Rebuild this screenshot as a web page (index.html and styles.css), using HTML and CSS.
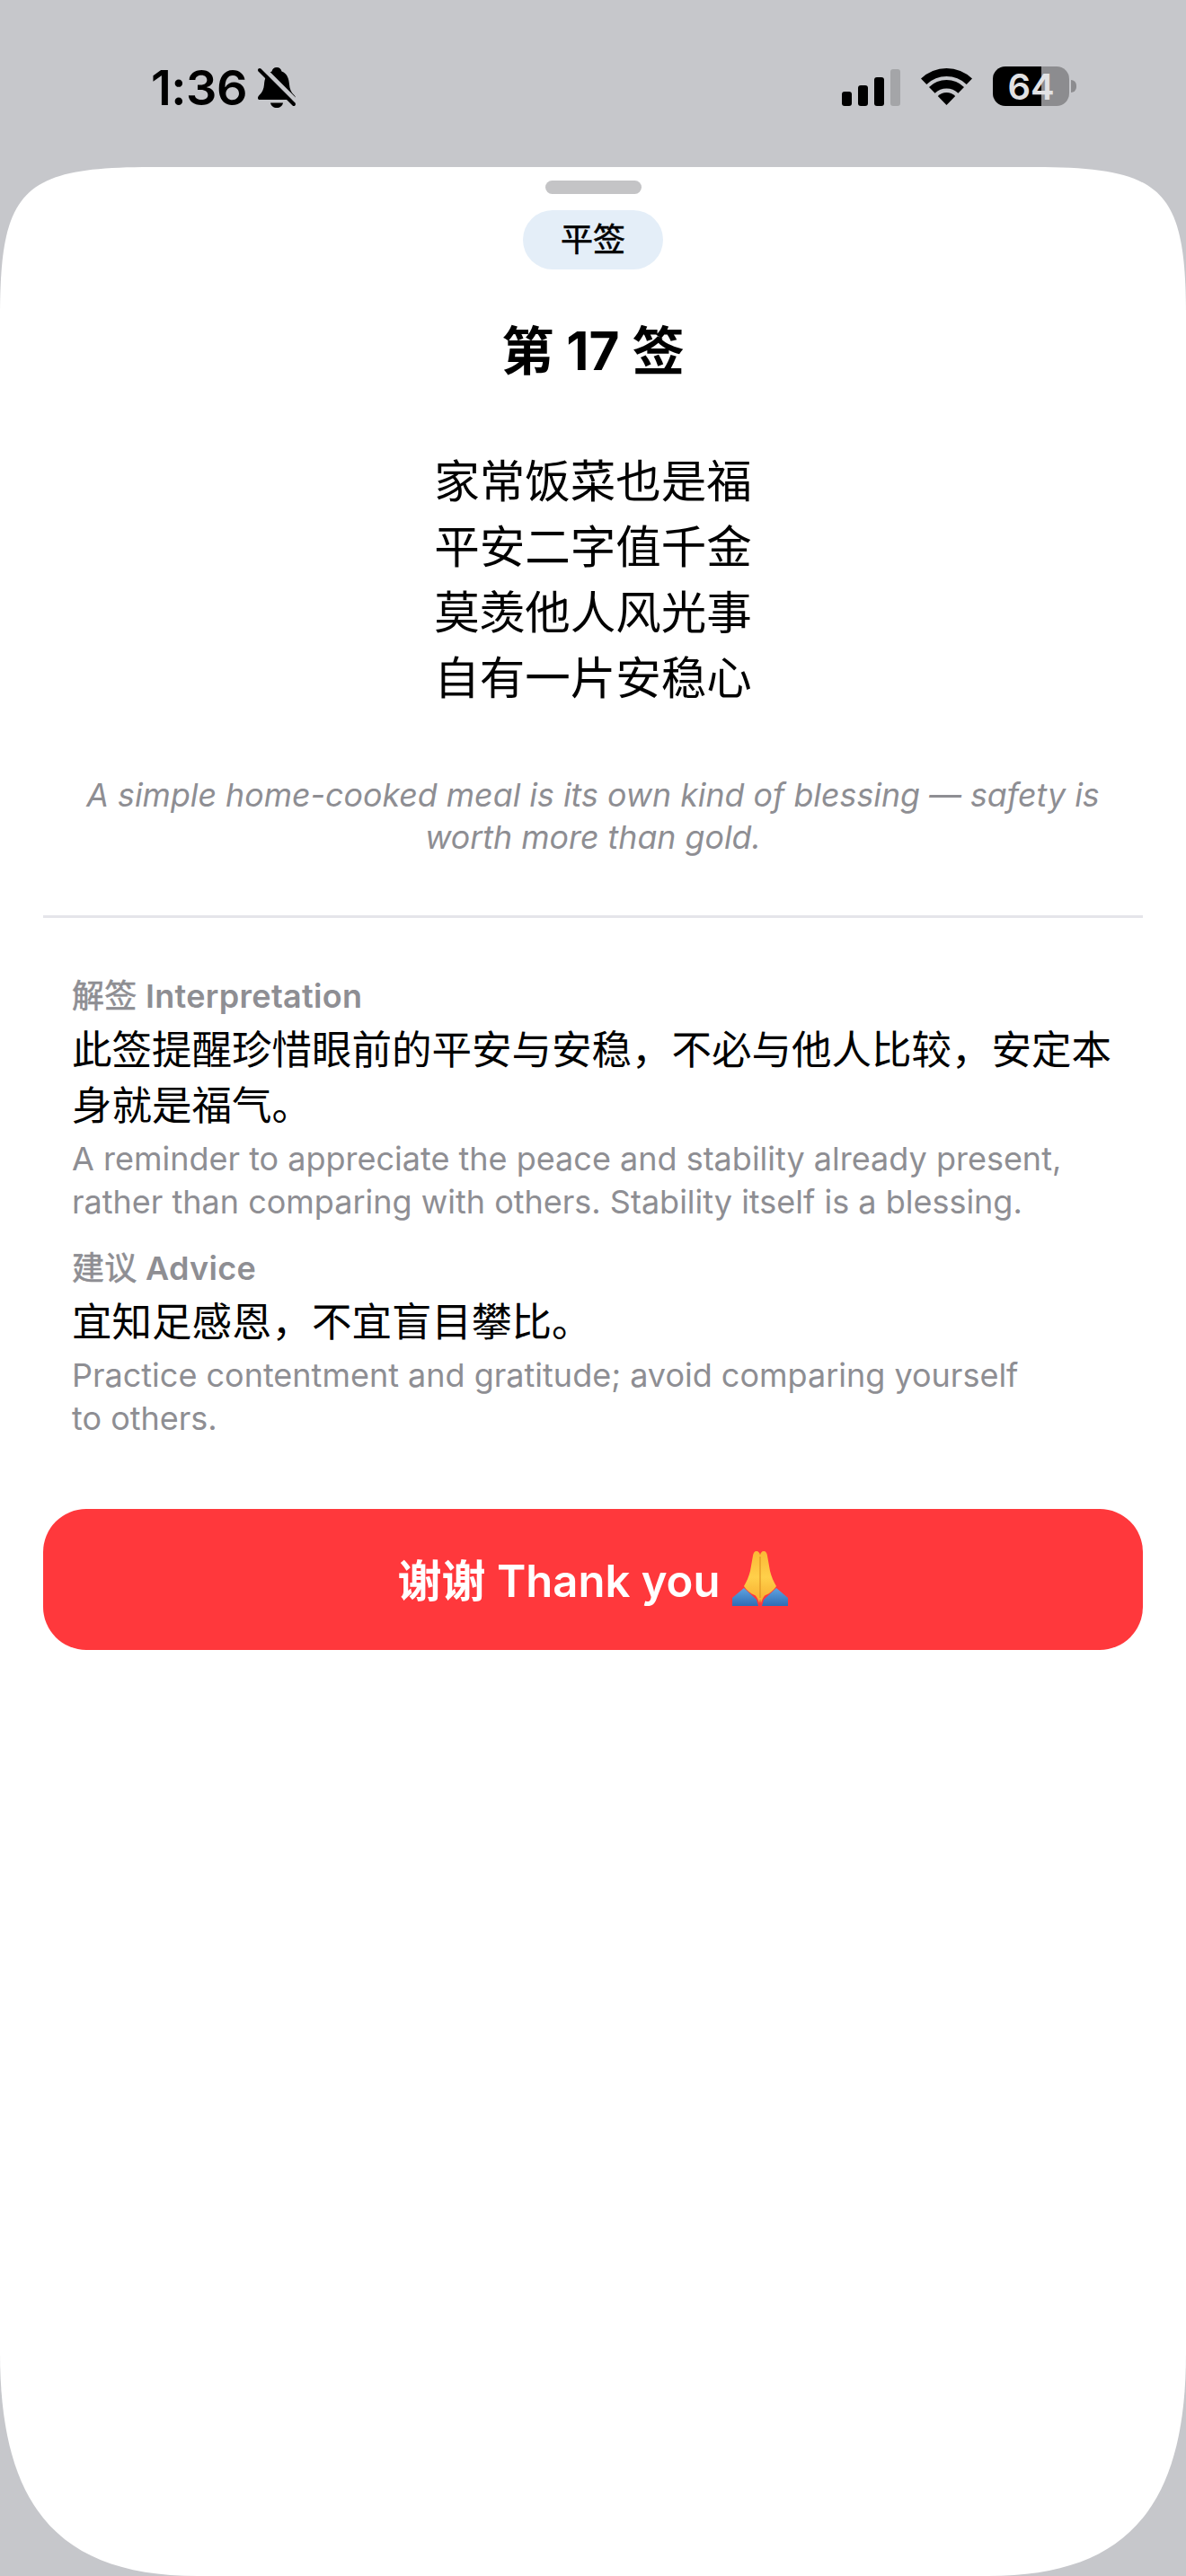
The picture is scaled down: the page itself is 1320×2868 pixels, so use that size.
FILE: index.html
```html
<!DOCTYPE html>
<html lang="zh">
<head>
    <meta charset="UTF-8">
    <meta name="viewport" content="width=device-width, initial-scale=1.0">
    <title>第 17 签</title>
    <link rel="stylesheet" href="styles.css">
</head>
<body>
    <!-- Status bar -->
    <div class="status-bar">
        <div class="status-left">
            <span class="clock">1:36</span>
            <svg class="bell" viewBox="0 0 42 45">
                <path d="M21 0c-3 0-5 2-5.500 4.500C9 7 7.500 13 7 19c-.4 5-2 8.500-5 11.500C.5 32 0 33 0 34.200 0 35.500 1 36 2.500 36h37c1.500 0 2.500-.5 2.500-1.800 0-1.200-.5-2.200-2-3.700-3-3-4.600-6.500-5-11.500-.5-6-2-12-8.500-14.500C26 2 24 0 21 0z"/>
                <path d="M14 39.500h14C27.500 43 24.500 45 21 45s-6.500-2-7-5.500z"/>
                <path class="bell-gap" d="M6 1l38 38"/>
                <path class="bell-slash" d="M2 3l38 38"/>
            </svg>
        </div>
        <div class="status-right">
            <div class="signal">
                <span class="bar bar-1"></span>
                <span class="bar bar-2"></span>
                <span class="bar bar-3"></span>
                <span class="bar bar-4"></span>
            </div>
            <svg class="wifi" viewBox="0 0 57 42">
                <path d="M0 12.500A41 41 0 0 1 57 12.500L50.700 19A32 32 0 0 0 6.300 19z"/>
                <path d="M9 21.900A28 28 0 0 1 48 21.900L41.400 28.700A18.500 18.500 0 0 0 15.600 28.700z"/>
                <path d="M18.800 31.900A14 14 0 0 1 38.200 31.900L28.500 42z"/>
            </svg>
            <div class="battery">
                <div class="battery-body">64</div>
                <span class="battery-nub"></span>
            </div>
        </div>
    </div>

    <!-- Result sheet -->
    <div class="sheet">
        <div class="handle"></div>
        <div class="tag">平签</div>
        <h1 class="title">第 17 签</h1>

        <div class="poem">
            <p>家常饭菜也是福</p>
            <p>平安二字值千金</p>
            <p>莫羡他人风光事</p>
            <p>自有一片安稳心</p>
        </div>

        <p class="translation">A simple home-cooked meal is its own kind of blessing — safety is worth more than gold.</p>

        <div class="divider"></div>

        <div class="section">
            <div class="label"><span class="label-zh">解签</span> Interpretation</div>
            <p class="body-zh">此签提醒珍惜眼前的平安与安稳，不必与他人比较，安定本身就是福气。</p>
            <p class="body-en">A reminder to appreciate the peace and stability already present, rather than comparing with others. Stability itself is a blessing.</p>
        </div>

        <div class="section">
            <div class="label"><span class="label-zh">建议</span> Advice</div>
            <p class="body-zh">宜知足感恩，不宜盲目攀比。</p>
            <p class="body-en">Practice contentment and gratitude; avoid comparing yourself<br>to others.</p>
        </div>

        <button class="thanks">
            <span>谢谢 Thank you</span>
            <svg class="pray" viewBox="0 0 62 61">
                <defs>
                    <linearGradient id="skin" x1="0" y1="0" x2="0" y2="1">
                        <stop offset="0" stop-color="#fbb836"/>
                        <stop offset="0.5" stop-color="#ffd04a"/>
                        <stop offset="1" stop-color="#f6ab2e"/>
                    </linearGradient>
                    <linearGradient id="sleeve" x1="0" y1="0" x2="0" y2="1">
                        <stop offset="0" stop-color="#5fa3e0"/>
                        <stop offset="1" stop-color="#2f6cb4"/>
                    </linearGradient>
                </defs>
                <path fill="url(#sleeve)" d="M0 52L13 41 27 54 29 61H0z"/>
                <path fill="url(#sleeve)" d="M62 52L49 41 35 54 33 61H62z"/>
                <path fill="url(#skin)" d="M27 0c-2.500 0-3.500 2-4 5L20 22c-1.500 6-4 12-7 17 2.500 4 7 8 12 10 2 1 4 5 5 9l1-5V5c0-3-2-5-4-5z"/>
                <path fill="url(#skin)" d="M35 0c2.500 0 3.500 2 4 5l3 17c1.500 6 4 12 7 17-2.500 4-7 8-12 10-2 1-4 5-5 9l-1-5V5c0-3 2-5 4-5z"/>
                <path class="pray-line" d="M31 6v46"/>
            </svg>
        </button>
    </div>
</body>
</html>
```

FILE: styles.css
```css
:root {
    --page: #c6c7cb;
    --grey-text: #8e8e93;
    --red: #ff383c;
    --cjk: 'Inter', 'Noto Sans CJK SC', sans-serif;
}

* {
    margin: 0;
    padding: 0;
    box-sizing: border-box;
}

body {
    width: 1320px;
    height: 2868px;
    display: flex;
    flex-direction: column;
    overflow: hidden;
    background: var(--page);
    color: #000;
    font-family: var(--cjk);
}

/* Status bar */
.status-bar {
    height: 186px;
    flex-shrink: 0;
    display: flex;
    justify-content: space-between;
    padding: 0 122px 0 168px;
}

.status-left {
    height: 100%;
    display: flex;
    align-items: flex-start;
    gap: 12px;
    padding-top: 65px;
}

.clock {
    font-size: 54px;
    font-weight: 600;
    line-height: 65px;
    letter-spacing: -0.5px;
}

.bell {
    width: 42px;
    height: 45px;
    margin-top: 10px;
    overflow: visible;
}

.bell-gap {
    fill: none;
    stroke: var(--page);
    stroke-width: 5px;
}

.bell-slash {
    fill: none;
    stroke: #000;
    stroke-width: 4px;
    stroke-linecap: round;
}

.status-right {
    display: flex;
    align-items: flex-start;
    padding-top: 74px;
}

.signal {
    width: 65px;
    height: 43px;
    margin-top: 1px;
    display: flex;
    align-items: flex-end;
    justify-content: space-between;
}

.bar {
    width: 11px;
    background: #000;
    border-radius: 3px;
}

.bar-1 { height: 16px; }
.bar-2 { height: 23px; }
.bar-3 { height: 32px; }
.bar-4 { height: 41px; background: #a4a5a8; }

.wifi {
    width: 57px;
    height: 42px;
    margin: 1px 23px 0;
}

.battery {
    display: flex;
    align-items: center;
    gap: 2px;
}

.battery-body {
    width: 85px;
    height: 44px;
    display: flex;
    align-items: center;
    justify-content: center;
    background: linear-gradient(90deg, #000 64%, #8c8c8f 64%);
    border-radius: 14px;
    color: #e2e2e4;
    font-size: 40px;
    font-weight: 600;
}

.battery-nub {
    width: 6px;
    height: 14px;
    background: #8c8c8f;
    border-radius: 0 7px 7px 0;
}

/* Sheet */
.sheet {
    flex: 1;
    display: flex;
    flex-direction: column;
    align-items: center;
    padding: 15px 48px 0;
    background: #fff;
    clip-path: path('M0 167C0 25 25 0 168 0H1152C1295 0 1320 25 1320 167V2434C1320 2610 1250 2682 1100 2682H220C70 2682 0 2610 0 2434Z');
}

.handle {
    width: 107px;
    height: 15px;
    background: #c4c4c6;
    border-radius: 8px;
}

.tag {
    width: 156px;
    height: 66px;
    margin-top: 18px;
    background: #e4eef8;
    border-radius: 33px;
    font-size: 36px;
    font-weight: 400;
    line-height: 66px;
    text-align: center;
    -webkit-text-stroke: 0.6px #000;
}

.title {
    margin-top: 55px;
    font-size: 58.500px;
    font-weight: 700;
    line-height: 72px;
}

.poem {
    margin-top: 72px;
    font-size: 50.500px;
    line-height: 73px;
    text-align: center;
}

.translation {
    width: 1160px;
    margin-top: 71px;
    color: var(--grey-text);
    font-size: 35.750px;
    font-style: italic;
    line-height: 47px;
    text-align: center;
}

.divider {
    width: 100%;
    height: 3px;
    margin-top: 63px;
    background: #e5e5ea;
}

.section {
    width: 100%;
    margin-top: 63px;
    padding: 0 32px;
}

.section + .section {
    margin-top: 26px;
}

.label {
    color: var(--grey-text);
    font-size: 36px;
    font-weight: 600;
    line-height: 48px;
    letter-spacing: 0.3px;
}

.label-zh {
    font-weight: 400;
    -webkit-text-stroke: 0.6px var(--grey-text);
}

.body-zh {
    margin-top: 5px;
    font-size: 44.500px;
    line-height: 62px;
}

.body-en {
    margin-top: 5px;
    color: var(--grey-text);
    font-size: 36px;
    line-height: 47.500px;
}

.thanks {
    width: 100%;
    height: 157px;
    margin-top: 77px;
    padding-bottom: 5px;
    display: flex;
    align-items: center;
    justify-content: center;
    gap: 14px;
    border: none;
    border-radius: 48px;
    background: var(--red);
    color: #fff;
    font-family: var(--cjk);
    font-size: 49px;
    font-weight: 600;
}

.pray {
    width: 62px;
    height: 61px;
    margin-bottom: -3px;
}

.pray-line {
    fill: none;
    stroke: #d98a1f;
    stroke-width: 1px;
}
```
